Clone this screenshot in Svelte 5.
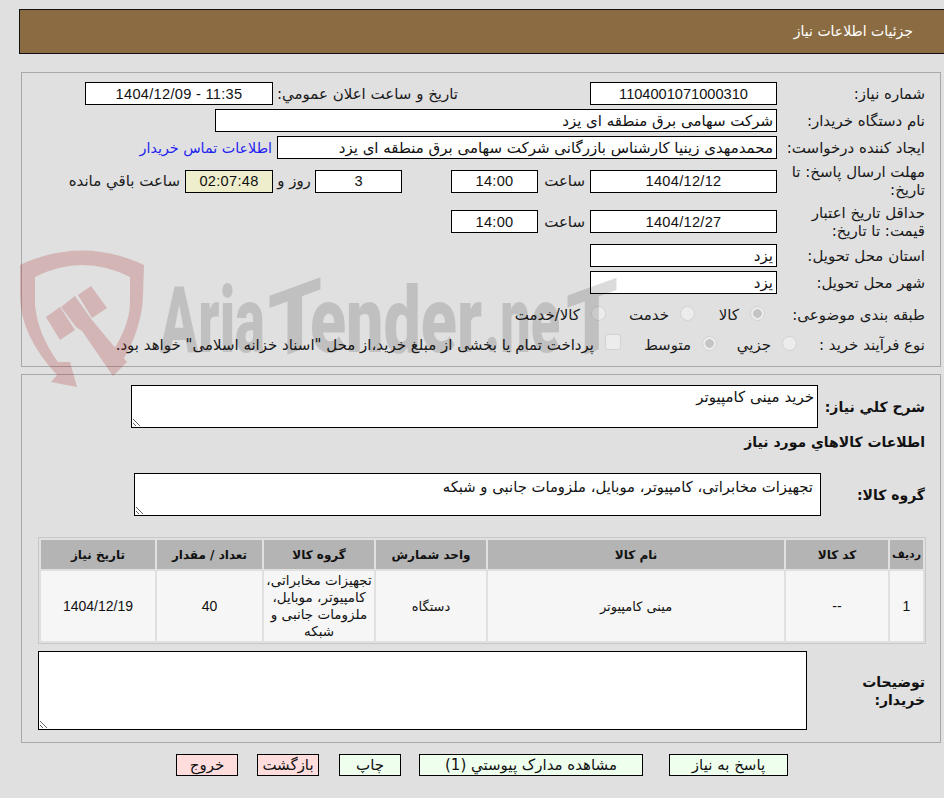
<script>
  const cols = [
    { title: 'ردیف', w: 33 },
    { title: 'کد کالا', w: 102 },
    { title: 'نام کالا', w: 296 },
    { title: 'واحد شمارش', w: 110 },
    { title: 'گروه کالا', w: 110 },
    { title: 'تعداد / مقدار', w: 105 },
    { title: 'تاریخ نیاز', w: 114 }
  ];
</script>

<div class="page">
  <header class="title">جزئیات اطلاعات نیاز</header>

  <section class="panel first">
    <div class="row">
      <span class="label">شماره نیاز:</span>
      <input class="field w187 num" readonly value="1104001071000310" />
      <span class="label second">تاریخ و ساعت اعلان عمومي:</span>
      <input class="field w188 num date" readonly value="1404/12/09 - 11:35" dir="ltr" />
    </div>
    <div class="row">
      <span class="label">نام دستگاه خریدار:</span>
      <input class="field w562 start" readonly value="شرکت سهامی برق منطقه ای یزد" />
    </div>
    <div class="row">
      <span class="label">ایجاد کننده درخواست:</span>
      <input class="field w500 start" readonly value="محمدمهدی زینیا کارشناس بازرگانی شرکت سهامی برق منطقه ای یزد" />
      <span class="link">اطلاعات تماس خریدار</span>
    </div>
    <div class="row tall">
      <span class="label">مهلت ارسال پاسخ: تا تاریخ:</span>
      <input class="field w187 num date" readonly value="1404/12/12" />
      <span class="unit">ساعت</span>
      <input class="field w87 num date" readonly value="14:00" />
      <input class="field w87 num away" readonly value="3" />
      <span class="days">روز و</span>
      <input class="field w88 num date timer" readonly value="02:07:48" />
      <span class="left">ساعت باقي مانده</span>
    </div>
    <div class="row tall t2">
      <span class="label">حداقل تاریخ اعتبار قیمت: تا تاریخ:</span>
      <input class="field w187 num date" readonly value="1404/12/27" />
      <span class="unit">ساعت</span>
      <input class="field w87 num date" readonly value="14:00" />
    </div>
    <div class="row">
      <span class="label">استان محل تحویل:</span>
      <input class="field w187 start" readonly value="یزد" />
    </div>
    <div class="row">
      <span class="label">شهر محل تحویل:</span>
      <input class="field w187 start" readonly value="یزد" />
    </div>
    <div class="row choice subject">
      <span class="label">طبقه بندی موضوعی:</span>
      <label class="opt o70"><input type="radio" name="subject" disabled checked />کالا</label>
      <label class="opt o89"><input type="radio" name="subject" disabled />خدمت</label>
      <label class="opt"><input type="radio" name="subject" disabled />کالا/خدمت</label>
    </div>
    <div class="row choice process">
      <span class="label">نوع فرآیند خرید :</span>
      <label class="opt o80"><input type="radio" name="process" disabled />جزیي</label>
      <label class="opt o96"><input type="radio" name="process" disabled checked />متوسط</label>
      <label class="opt"><input type="checkbox" disabled />پرداخت تمام یا بخشی از مبلغ خرید،از محل "اسناد خزانه اسلامی" خواهد بود.</label>
    </div>
  </section>

  <section class="panel second-panel">
    <div class="block top">
      <span class="label strong narrow">شرح کلي نیاز:</span>
      <textarea class="area a1" readonly>خرید مینی کامپیوتر</textarea>
    </div>
    <h2 class="heading">اطلاعات کالاهاي مورد نیاز</h2>
    <div class="block group">
      <span class="label strong">گروه کالا:</span>
      <textarea class="area a2" readonly>تجهیزات مخابراتی، کامپیوتر، موبایل، ملزومات جانبی و شبکه</textarea>
    </div>
    <table class="items">
      <colgroup>
        {#each cols as c}<col style="width:{c.w}px" />{/each}
      </colgroup>
      <thead>
        <tr>{#each cols as c}<th>{c.title}</th>{/each}</tr>
      </thead>
      <tbody>
        <tr>
          <td class="num">1</td>
          <td class="num">--</td>
          <td>مینی کامپیوتر</td>
          <td>دستگاه</td>
          <td class="wrap">تجهیزات مخابراتی، کامپیوتر، موبایل، ملزومات جانبی و شبکه</td>
          <td class="num">40</td>
          <td class="num">1404/12/19</td>
        </tr>
      </tbody>
    </table>
    <div class="block notes">
      <span class="label strong n">توضیحات خریدار:</span>
      <textarea class="area a3" readonly></textarea>
    </div>
  </section>

  <footer class="actions">
    <button class="ok b119">پاسخ به نیاز</button>
    <button class="ok b224">مشاهده مدارک پیوستي (1)</button>
    <button class="ok b62">چاپ</button>
    <button class="no b62 m2">بازگشت</button>
    <button class="no b62 m1">خروج</button>
  </footer>

  <svg class="watermark" viewBox="0 0 944 798" aria-hidden="true">
    <g class="shield">
      <path d="M20 265 Q82 236 144 265 L143 295 Q142 330 120 365 L112 352 Q130 325 130 302 L130 277 Q82 253 35 277 L35 305 Q38 335 58 362 L70 362 L77 387 L51 382 L57 375 Q20 335 20 295 Z" />
      <path d="M46 317 L60 307 L75 330 L60 340 Z" />
      <path d="M61 307 L75 296 L92 320 L127 362 L113 376 L82 331 L76 327 Z" />
      <path d="M78 295 L91 286 L107 308 L92 318 Z" />
    </g>
    <g class="mark">
      <text x="160" y="352" textLength="105" lengthAdjust="spacingAndGlyphs">Aria</text>
      <text x="268" y="352" textLength="54" lengthAdjust="spacingAndGlyphs" transform="translate(295 352) skewY(-20) translate(-295 -352)">T</text>
      <text x="310" y="352" textLength="172" lengthAdjust="spacingAndGlyphs">ender</text>
      <text x="484" y="352" textLength="76" lengthAdjust="spacingAndGlyphs">.ne</text>
      <text x="566" y="352" textLength="52" lengthAdjust="spacingAndGlyphs" transform="translate(592 352) skewY(-20) translate(-592 -352)">T</text>
    </g>
  </svg>
</div>

<style>
  :global(body) {
    margin: 0;
    background: #e0e0e0;
  }

  .page {
    position: relative;
    direction: rtl;
    width: 944px;
    height: 798px;
    overflow: hidden;
    box-sizing: border-box;
    padding-top: 9px;
    background: #e0e0e0;
    color: #1a1a1a;
    font-family: "DejaVu Sans", sans-serif;
    font-size: 15px;
  }

  .title {
    box-sizing: border-box;
    height: 45px;
    margin-left: 19px;
    padding-right: 31px;
    border: 1px solid #111;
    border-right: 0;
    background: #8b6c42;
    color: #fff;
    font-size: 14px;
    line-height: 43px;
  }

  .panel {
    box-sizing: border-box;
    margin: 0 3px 0 21px;
    border: 1px solid #a8a8a8;
    padding-right: 15px;
  }

  .first {
    display: flex;
    flex-direction: column;
    gap: 4px;
    height: 295px;
    margin-top: 18px;
    padding-top: 9px;
  }

  .row {
    display: flex;
    align-items: center;
    min-height: 23px;
  }

  .tall { height: 36px; }
  .t2 { height: 37px; }

  .label {
    box-sizing: border-box;
    flex: none;
    width: 148px;
    padding-left: 4px;
    line-height: 18px;
  }

  .second {
    width: 185px;
    margin-right: 132px;
    padding-left: 0;
    white-space: nowrap;
  }

  .field {
    box-sizing: border-box;
    flex: none;
    height: 23px;
    margin: 0;
    padding: 1px 2px;
    border: 1px solid #000;
    border-radius: 0;
    outline: 0;
    background: #fff;
    color: #111;
    font: inherit;
    text-align: center;
  }

  .start { text-align: right; padding-right: 3px; }

  .num {
    font-family: "Liberation Sans", sans-serif;
    font-size: 14.6px;
  }

  .date { letter-spacing: 0.3px; }

  .w187 { width: 187px; }
  .w188 { width: 188px; }
  .w562 { width: 562px; }
  .w500 { width: 500px; }
  .w87 { width: 87px; }
  .w88 { width: 88px; }

  .link { margin-right: 5px; color: #2323f0; white-space: nowrap; font-size: 14.3px; }

  .unit { flex: none; box-sizing: border-box; width: 52px; padding-right: 5px; }
  .away { margin-right: 49px; }
  .days { flex: none; width: 42px; text-align: center; }
  .left { flex: none; margin-right: 5px; }

  .timer { background: #eeeecc; }

  .subject { margin-top: 5px; }
  .process { margin-top: 3px; }
  .subject .label { width: 160px; }
  .process .label { width: 128px; padding-left: 0; }

  .opt {
    display: flex;
    align-items: center;
    flex: none;
    gap: 11px;
    box-sizing: border-box;
  }

  .o70 { width: 70px; }
  .o89 { width: 89px; }
  .o80 { width: 80px; }
  .o96 { width: 96px; }

  .opt input {
    appearance: none;
    flex: none;
    box-sizing: border-box;
    width: 15px;
    height: 15px;
    margin: -3px 0 0;
    border: 1px solid #d2d2d2;
    border-radius: 50%;
    background: #ececec;
  }

  .opt input[type="checkbox"] {
    width: 16px;
    height: 16px;
    margin: -5px 0 0;
    border-radius: 3px;
  }

  .opt input:checked {
    background: radial-gradient(circle, #c4c4c4 0 4px, #ececec 4.6px);
  }

  .second-panel {
    height: 369px;
    margin-top: 7px;
    padding-top: 10px;
  }

  .block { display: flex; align-items: center; }

  .strong { font-weight: 700; font-size: 14px; color: #111; }
  .narrow { width: 107px; padding-left: 0; white-space: nowrap; }

  .area {
    box-sizing: border-box;
    flex: none;
    margin: 0;
    border: 1px solid #000;
    border-radius: 0;
    outline: 0;
    background: #fff;
    color: #111;
    font: inherit;
    direction: rtl;
    resize: both;
    overflow: hidden;
  }

  .a1 { width: 687px; height: 43px; padding: 2px 3px; }

  .heading {
    margin: 0;
    height: 29px;
    font-size: 14px;
    line-height: 29px;
    font-weight: 700;
    color: #111;
  }

  .group { margin-top: 16px; }
  .group .label { width: 104px; padding-left: 0; }
  .a2 { width: 687px; height: 43px; padding: 4px 7px; font-size: 14.8px; }

  .items {
    box-sizing: border-box;
    width: 888px;
    margin: 21px -1px 0 0;
    border: 1px solid #c8c8c8;
    border-spacing: 2px;
    border-collapse: separate;
    table-layout: fixed;
    color: #111;
  }

  .items th {
    height: 29px;
    padding: 0;
    background: #b4b4b4;
    font-size: 12px;
    font-weight: 700;
  }

  .items th:first-child { font-size: 11px; }

  .items td {
    height: 70px;
    padding: 0 2px;
    background: #f6f6f6;
    font-size: 13px;
    line-height: 17px;
    text-align: center;
  }

  .items td.num { font-size: 14px; }
  .items td.wrap { font-size: 13.5px; }

  .notes { margin-top: 7px; }
  .notes .n { width: 118px; }
  .a3 { width: 769px; height: 79px; }

  .actions {
    display: flex;
    justify-content: flex-start;
    gap: 18px;
    margin: 11px 156px 0 0;
    direction: rtl;
  }

  .actions button {
    box-sizing: border-box;
    height: 22px;
    padding: 0;
    border: 1px solid #000;
    border-radius: 0;
    color: #111;
    font: inherit;
    font-size: 15px;
  }

  .ok { background: #eeffee; }
  .no { background: #ffdddd; }
  .b119 { width: 119px; margin-left: 8px; }
  .b224 { width: 224px; }
  .b62 { width: 62px; }
  .m2 { margin-right: 2px; }
  .m1 { margin-right: 1px; }

  .watermark {
    position: absolute;
    left: 0;
    top: 0;
    width: 944px;
    height: 798px;
    pointer-events: none;
  }

  .shield {
    fill: #a82020;
    opacity: 0.22;
  }

  .mark text {
    font-family: Roboto, sans-serif;
    font-size: 92px;
    font-weight: 900;
    fill: #000;
    fill-opacity: 0.14;
    direction: ltr;
    unicode-bidi: plaintext;
  }
</style>
